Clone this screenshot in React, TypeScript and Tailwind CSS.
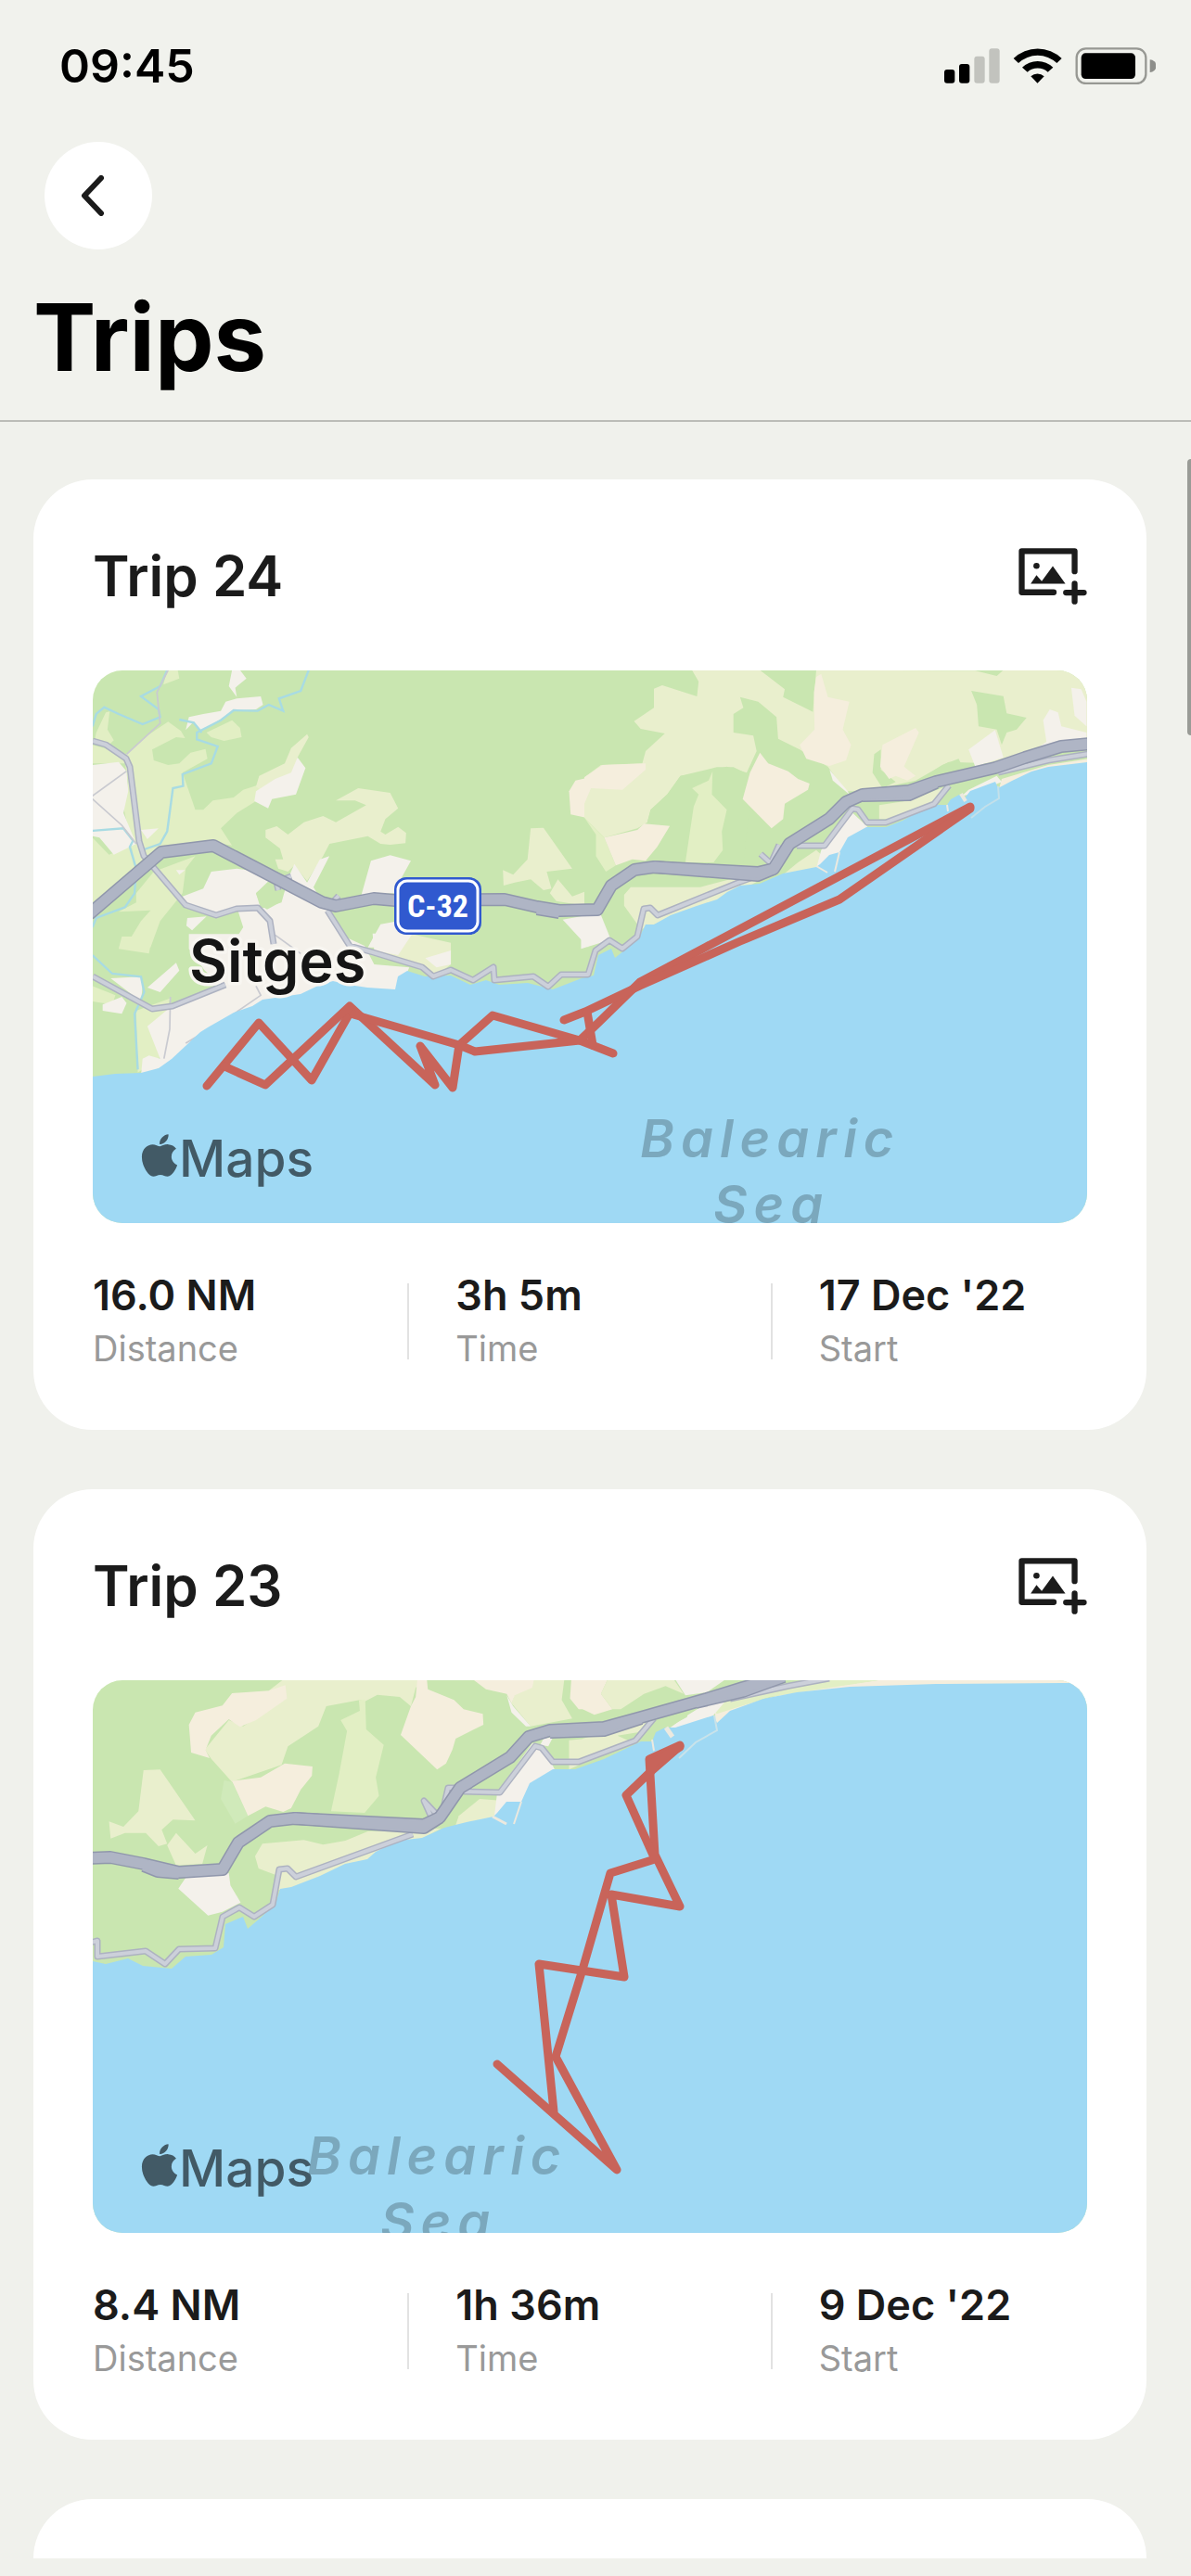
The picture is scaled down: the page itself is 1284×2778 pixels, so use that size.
import type { ReactNode } from "react";
import { FaApple } from "react-icons/fa";

const C = {
  land: "#c9e6b0",
  field: "#e9efcd",
  meadow: "#e2efc4",
  sand: "#f5eedd",
  town: "#f4f1eb",
  sea: "#9fd9f4",
  stream: "#a8dbe3",
  thin: "#c9cad0",
};

type Trip = {
  name: string;
  distance: string;
  time: string;
  start: string;
  map: ReactNode;
};

function Shapes({ fill, list }: { fill: string; list: string[] }) {
  return (
    <g fill={fill}>
      {list.map((points) => (
        <polygon key={points} points={points} />
      ))}
    </g>
  );
}

function Roads({ list, outline, fill, width }: { list: string[]; outline: string; fill: string; width: number }) {
  return (
    <g fill="none" strokeLinejoin="round">
      {list.map((points) => (
        <polyline key={"o" + points} points={points} stroke={outline} strokeWidth={width} />
      ))}
      {list.map((points) => (
        <polyline key={"f" + points} points={points} stroke={fill} strokeWidth={width - 3} />
      ))}
    </g>
  );
}

function MinorRoads({ list }: { list: string[] }) {
  return <Roads list={list} outline="#adb2c1" fill="#ccd0da" width={7} />;
}

function Motorway({ list }: { list: string[] }) {
  return <Roads list={list} outline="#9097ac" fill="#afb5c5" width={14} />;
}

function Track({ list }: { list: string[] }) {
  return (
    <g fill="none" stroke="#c8645a" strokeWidth={9} strokeLinejoin="round" strokeLinecap="round">
      {list.map((points) => (
        <polyline key={points} points={points} />
      ))}
    </g>
  );
}

function SeaLabel({ x, y }: { x: number; y: number }) {
  return (
    <g className="fill-[#7ba8bd] text-[56px] font-semibold italic tracking-[7px]">
      <text x={x} y={y}>
        Balearic
      </text>
      <text x={x + 79} y={y + 71}>
        Sea
      </text>
    </g>
  );
}

function MapFrame({ label, children }: { label: string; children: ReactNode }) {
  return (
    <svg viewBox="0 0 1072 596" role="img" aria-label={label} className="mt-[62px] block w-full rounded-[32px]">
      <rect width="1072" height="596" fill={C.land} />
      {children}
      <FaApple x={46} y={497} size={52} color="#425a66" />
      <text x={93} y={546} className="fill-[#425a66] text-[55px] font-medium">
        Maps
      </text>
    </svg>
  );
}

function SitgesMap() {
  return (
    <MapFrame label="Map of Trip 24">
      {/* Garraf hills, west */}
      <g transform="translate(-10 -13) scale(.3444 .3333)">
        <Shapes
          fill={C.meadow}
          list={[
            "250,85 262,38 295,38 300,65",
            "35,265 40,240 70,175 82,172 75,230 95,265 80,280",
            "135,310 200,250 265,205 305,235 318,258 290,255 215,295 220,330 265,345 300,340 335,305 382,293 388,325 310,370 350,490 375,490 405,460 470,450 500,425 545,410 550,380 560,430 535,465 480,500 430,550 465,605 400,595 245,610 160,700 150,600 125,480 140,400 130,340 28,340 28,280 100,300",
            "385,240 465,200 490,225 495,255 440,267 400,255",
            "28,580 80,635 150,605 160,700 28,810",
            "165,760 220,690 350,640 320,680 310,760 240,850 210,935 130,935 180,850 210,815 110,820 165,790",
          ]}
        />
        <Shapes
          fill={C.field}
          list={[
            "540,415 550,380 630,340 650,290 700,245 705,255 670,320 660,370 560,430",
            "790,460 860,420 960,435 985,485 945,520 930,560 945,570 985,545 1010,565 1008,598 960,603 930,600 890,575 770,600 750,640 700,720 660,670 640,690 610,680 600,650 625,650 615,615 570,580 570,555 605,543 640,570 690,530 750,510 790,530 885,475 850,460",
            "1400,550 1440,548 1530,680 1450,690 1465,745 1440,750 1400,715 1350,725 1315,735 1313,685 1345,700 1390,650",
            "1485,715 1530,770 1568,755 1568,800 1480,785 1460,760",
          ]}
        />
        <Shapes
          fill={C.town}
          list={[
            "28,345 110,335 135,365 140,430 125,500 165,600 95,635 50,580 28,575",
            "465,38 490,38 510,65 475,95 480,125 455,90",
            "330,190 375,180 430,170 445,140 480,130 555,123 562,150 540,165 470,170 370,235 345,205 320,232",
            "540,430 600,390 650,370 670,320 695,355 665,440 590,455 578,485 535,462",
            "310,770 375,745 400,690 480,680 550,690 580,720 540,760 555,810 620,790 640,715 660,665 700,725 740,650 770,640 720,740 790,860 830,935 460,935 500,870 480,805 415,825 320,795",
            "900,655 960,637 1025,655 985,730 975,760 870,765",
            "325,840 385,835 340,880 322,865",
            "890,935 930,860 985,850 1040,890 1000,935",
            "180,555 235,550 200,585",
            "1500,845 1580,830 1580,935",
            "290,685 318,685 300,700",
          ]}
        />
        <Shapes fill={C.land} list={["540,760 580,725 630,750 615,790 575,812 555,800", "790,830 900,800 930,850 890,935 840,920"]} />
        <Shapes fill={C.sand} list={["1520,430 1540,395 1572,388 1572,515 1525,505"]} />
        <g fill="none" stroke={C.stream} strokeWidth="7">
          <polyline points="28,220 40,180 65,158 110,180 185,213 240,190 235,165 180,123 240,90 262,38" />
          <polyline points="705,38 680,105 612,130 625,170 580,150 545,170 470,168 430,200 355,240 355,262 420,285 400,340 310,375 312,413 280,420 262,560 240,600 190,618" />
          <polyline points="28,558 125,550 155,590 145,610 165,680 160,760 130,805 40,840 28,870" />
          <polyline points="300,198 345,208 370,240" />
        </g>
        <g fill="none" stroke={C.thin} strokeWidth="5">
          <polyline points="265,38 230,110 240,210 135,310" />
          <polyline points="28,445 135,365" />
          <polyline points="28,455 120,540 165,600" />
        </g>
      </g>
      {/* hills above Castelldefels, east */}
      <g transform="translate(530 -13) scale(.3571 .3333)">
        <Shapes
          fill={C.field}
          list={[
            "325,38 345,75 340,123 235,87 210,98 210,160 150,203 170,228 243,243 185,300 175,340 50,345 0,385 0,515 60,580 160,550 190,530 200,490 250,440 290,380 380,365 430,350 490,370 520,300 510,250 450,240 450,180 480,160 470,125 525,140 580,190 585,260 650,295 735,350 790,430 850,430 1000,395 1100,335 1230,340 1520,270 1520,38 1265,38 1245,57 1180,40 700,38 690,173 600,125 605,100 530,38",
            "120,765 140,740 240,740 350,740 440,715 500,712 540,712 430,775 200,865 165,880 160,860 120,800",
            "645,660 700,620 720,640 700,680 600,700",
            "890,475 980,460 1090,415 1060,460 960,520 890,520",
          ]}
        />
        <Shapes
          fill={C.land}
          list={[
            "1168,105 1265,122 1275,178 1335,192 1305,230 1275,240 1260,280 1245,230 1190,220 1185,150",
            "875,310 895,295 895,360 940,400 900,420 870,370",
            "1000,400 1080,345 1130,325 1150,370",
            "290,380 400,352 450,352 495,375 500,470 480,660 250,660 170,655 220,610 258,542 190,530 200,490 250,440",
          ]}
        />
        <Shapes
          fill={C.meadow}
          list={["387,365 385,440 430,490 415,560 418,620 390,660 305,660 330,480 345,440 325,420 375,395", "0,515 35,570 35,640 65,690 95,670 60,580"]}
        />
        <Shapes
          fill={C.sand}
          list={[
            "700,60 715,50 735,125 800,140 780,230 805,280 790,330 740,348 670,325 650,280 695,230 693,110",
            "900,280 1000,225 1010,240 965,350 1000,380 975,395 940,380 920,390 893,350",
            "0,385 55,345 185,340 185,360 115,425 20,420 0,470",
            "530,305 555,340 615,365 645,390 680,405 675,425 605,470 600,520 565,550 478,455 500,370",
            "60,580 160,555 180,535 258,542 220,610 185,655 145,650 95,670",
            "1250,430 1260,390 1400,345 1520,325 1520,345 1400,360",
          ]}
        />
        <Shapes
          fill={C.town}
          list={[
            "810,500 855,545 795,600 770,640 700,680 715,620",
            "1160,295 1240,232 1265,320 1180,350",
            "1340,310 1395,270 1385,200 1405,165 1430,175 1440,220 1516,240 1516,265 1400,290",
            "1470,95 1500,100 1516,140 1516,220 1480,185",
            "-10,835 50,830 80,910 -10,940",
            "740,360 795,430 800,440 750,395",
            "1140,445 1160,425 1245,380 1260,400 1165,440",
          ]}
        />
      </g>
      {/* Sitges and its beaches */}
      <g transform="translate(-10 287) scale(.3444 .3333)">
        <Shapes fill={C.meadow} list={["110,40 120,0 215,0 205,55", "28,160 100,190 90,220 28,210", "165,240 270,200 240,390 170,440"]} />
        <Shapes
          fill={C.field}
          list={["900,60 1020,-10 1150,20 1150,90 1100,130 1060,100"]}
        />
        <Shapes
          fill={C.town}
          list={[
            "330,-8 800,-8 880,30 910,90 1020,100 985,180 740,200 530,260 320,390 180,450 185,395 205,385 240,395 200,290 270,230 440,165 380,110 330,40",
            "60,220 120,195 135,215 120,250 60,240",
            "85,135 180,130 185,160 180,210",
            "200,165 290,85 300,110 240,180",
            "905,-10 1030,-10 985,60 910,45",
            "1070,70 1150,45 1150,90 1105,100",
          ]}
        />
        <polyline points="28,60 90,120 180,130 190,180 160,250 170,430" fill="none" stroke={C.stream} strokeWidth="7" />
        <g fill="none" stroke={C.thin} strokeWidth="5">
          <polyline points="272,195 270,300 252,395" />
          <polyline points="320,345 450,265 555,190 540,160" />
          <polyline points="600,-5 680,55" />
        </g>
      </g>
      <polygon
        fill={C.sea}
        points="0,438 24,435 52,434 71,429 85,419 100,405 116,390 124,385 152,369 172,362 183,355 224,349 245,339 259,335 276,339 296,342 326,344 329,330 339,324 358,330 386,329 407,339 424,334 438,339 469,337 496,344 527,332 540,329 545,307 559,300 563,310 588,290 596,274 605,274 623,264 651,254 673,247 684,239 698,232 719,230 744,219 780,212 784,209 794,199 805,196 814,180 834,169 855,169 873,162 887,154 905,145 921,145 925,139 934,134 939,139 946,130 973,120 976,127 991,119 1012,109 1030,104 1072,99 1072,596 0,596"
      />
      <g fill="none" stroke="#ece9df" strokeWidth="2">
        <polyline points="780,211 792,218" />
        <polyline points="805,196 800,217" />
        <polyline points="936,133 941,141" strokeWidth="4" />
        <polyline points="921,145 922,152" />
        <polyline points="976,125 977,138 962,147 947,159" stroke="#c3e0ea" />
      </g>
      <MinorRoads
        list={[
          "0,76 14,80 36,95 40,104 50,184 55,200 100,253 133,264 155,257 178,256 191,270 195,295",
          "0,330 64,365 86,362 143,339",
          "253,259 277,297 302,304 355,320 367,330 386,323 410,334 432,320 433,334 475,330 491,341 505,328 534,328 542,302 557,291 571,300 587,287 594,257 601,256 609,264 698,228 709,224",
          "759,189 789,189 819,149 825,150 835,164 855,164 907,144 923,124",
          "976,110 1030,97 1074,90",
          "720,198 731,208 740,188",
          "200,237 198,228 214,222",
          "253,256 265,243",
        ]}
      />
      <Motorway
        list={[
          "605,212 717,221 734,214",
          "830,135 880,134 909,121",
          "479,257 503,261",
          "-4,263 74,196 130,189 247,250 262,254 303,246 326,248 444,247 479,255 503,259 544,258 559,232 584,215 605,212 717,218 734,214 751,187 794,160 812,142 830,134 880,130 909,120 973,105 1005,94 1044,82 1076,79",
        ]}
      />
      <rect x="325" y="223" width="94" height="62" rx="13" fill="#3059cf" />
      <rect x="329" y="227" width="86" height="54" rx="10" fill="none" stroke="#fff" strokeWidth="3" />
      <text
        x="372"
        y="266"
        textAnchor="middle"
        className="fill-white font-['Liberation_Sans_Narrow','Roboto_Condensed',Roboto,sans-serif] text-[34px] font-bold"
      >
        C-32
      </text>
      <text
        x="104"
        y="336"
        className="fill-[#151515] stroke-[#f8f6f1] text-[63px] font-semibold"
        strokeWidth="7"
        strokeLinejoin="round"
        paintOrder="stroke"
      >
        Sitges
      </text>
      <SeaLabel x={590} y={525} />
      <Track
        list={[
          "123,448 179,380 236,442 279,366",
          "142,427 186,447 277,362 369,447 353,405 388,450 395,404 431,372 525,399 561,413",
          "281,371 395,404 412,411 525,399 545,380 590,336 946,147",
          "508,377 531,368 590,340 698,292 805,247 946,149",
          "533,368 539,404",
        ]}
      />
    </MapFrame>
  );
}

function CoastMap() {
  return (
    <MapFrame label="Map of Trip 23">
      {/* hills, west */}
      <g transform="translate(-10 -12) scale(.3444 .3333)">
        <Shapes
          fill={C.field}
          list={[
            "625,34 580,70 635,95 500,185 455,165 380,260 400,290 465,365 620,310 640,250 735,185 760,120 865,100 880,105 920,83 990,90 1025,120 1040,60 1078,34",
            "188,327 240,325 350,490 280,487 245,520 262,565 235,573 195,530 130,530 85,548 80,493 125,510 172,460",
            "290,530 350,597 388,570 372,630 290,635 262,570",
            "537,605 560,565 690,553 750,568 820,555 890,525 1120,515 1060,548 900,612 640,712 605,715 600,665 548,645",
            "1165,505 1175,475 1240,420 1305,425 1310,480",
            "1340,110 1350,80 1410,34 1505,34 1497,100 1530,160 1400,185",
            "1520,230 1572,225 1572,300 1520,325",
          ]}
        />
        <Shapes fill={C.meadow} list={["862,100 865,135 805,165 825,200 800,340 775,460 880,465 925,410 915,350 940,245 885,195 882,100"]} />
        <Shapes fill="#d0eaba" list={["440,360 465,365 515,475 475,500 430,420"]} />
        <Shapes
          fill={C.sand}
          list={[
            "330,180 350,140 435,118 465,78 580,70 632,52 637,95 540,165 490,187 455,162 400,215 382,262 395,288 337,270",
            "1045,34 1075,34 1078,65 1160,100 1190,130 1250,145 1252,180 1165,225 1155,260 1135,305 1107,325 993,213 1025,120 1040,90",
            "465,362 555,350 630,305 717,315 715,345 680,390 650,450 625,462 570,445 515,475",
            "1220,34 1410,34 1405,60 1350,85 1340,110 1325,80 1260,65",
            "1527,34 1572,34 1572,130 1550,130 1523,95",
          ]}
        />
        <Shapes
          fill={C.town}
          list={[
            "297,710 320,675 455,660 460,700 492,755 435,785 390,797",
            "1405,240 1440,250 1475,325 1400,380 1370,440 1285,485 1295,400",
            "1440,225 1470,220 1455,250 1430,245",
            "1325,85 1345,120 1400,185 1385,185 1340,140",
          ]}
        />
      </g>
      {/* harbour and beach, east */}
      <g transform="translate(530 -12) scale(.3571 .3333)">
        <Shapes fill={C.sand} list={["-5,34 70,34 50,80 85,130 30,148 -5,130", "395,190 395,140 620,75 900,34 1520,34 1520,65 700,80"]} />
        <Shapes fill={C.field} list={["70,34 270,34 300,80 245,55 180,80 110,130 85,130 50,80", "-5,225 180,165 190,165 150,230 -5,290", "180,235 215,225 210,260"]} />
        <Shapes fill={C.meadow} list={["385,125 440,100 740,34 900,34 560,90 400,145"]} />
        <Shapes fill={C.town} list={["275,34 425,34 370,75 305,85", "245,200 310,150 370,110 430,98 385,155 275,195"]} />
        <Shapes fill={C.land} list={["100,215 160,205 250,150 315,130 310,155 215,210 205,235 140,235"]} />
      </g>
      <polygon
        fill={C.sea}
        points="0,303 14,306 38,300 54,308 85,311 100,298 128,296 141,288 143,263 162,255 167,268 181,256 197,241 202,225 214,223 245,211 272,198 296,193 305,185 329,173 355,170 379,159 403,153 432,147 436,143 446,131 462,131 471,111 496,96 520,96 551,85 591,66 603,66 607,56 617,51 628,51 669,38 673,46 687,33 723,20 759,13 816,7 909,4 1044,3 1072,3 1072,596 0,596"
      />
      <g fill="none" stroke="#ece9df" strokeWidth="2">
        <polyline points="431,147 446,155" strokeWidth="3" />
        <polyline points="462,131 454,155" />
        <polyline points="618,51 625,61" strokeWidth="5" />
        <polyline points="603,64 605,76" />
        <polyline points="670,38 673,54 650,67 632,84" stroke="#c9e3ea" />
      </g>
      <MinorRoads
        list={[
          "-3,283 5,281 5,298 57,292 78,306 93,290 132,289 140,255 158,245 174,255 194,242 201,204 210,203 219,212 345,166",
          "400,120 439,121 477,71 484,73 496,88 524,88 585,65 605,41",
          "687,20 751,6 794,-2",
          "372,146 357,130 366,150",
          "376,146 383,116 394,116",
        ]}
      />
      <Motorway
        list={[
          "217,149 357,159 374,148",
          "55,200 70,206 93,208",
          "493,56 551,54 591,41",
          "650,24 701,12 745,-4",
          "-4,192 19,191 55,198 93,207 140,204 157,175 191,152 217,149 357,156 374,148 396,116 450,83 470,61 493,54 551,51 591,40 662,20 701,8 744,-4",
        ]}
      />
      <SeaLabel x={231} y={533} />
      <Track
        list={[
          "633,70 600,85 606,188 633,244 559,231 573,320 481,306 497,465",
          "436,414 565,528 499,406 528,312 558,208 606,193 575,124 602,98 633,71",
          "633,72 602,90 602,98",
        ]}
      />
    </MapFrame>
  );
}

const trips: Trip[] = [
  { name: "Trip 24", distance: "16.0 NM", time: "3h 5m", start: "17 Dec '22", map: <SitgesMap /> },
  { name: "Trip 23", distance: "8.4 NM", time: "1h 36m", start: "9 Dec '22", map: <CoastMap /> },
];

function AddPhotoIcon() {
  return (
    <svg viewBox="0 0 222 184" className="h-[61px] w-[74px]" aria-hidden="true">
      <g fill="none" stroke="#1b1b1b" strokeWidth="19" strokeLinecap="round" strokeLinejoin="round">
        <path d="M182 76V10H10v134h104" />
        <path d="M182 116v58M154 145h58" />
      </g>
      <circle cx="58" cy="58" r="10" fill="#1b1b1b" />
      <path d="M39 116l19-28 17 20 36-49 41 57z" fill="#1b1b1b" />
    </svg>
  );
}

function StatusBar() {
  return (
    <div className="flex h-[142px] items-center justify-between pr-[38px] pl-16">
      <time className="text-[50px] leading-none font-semibold text-black">09:45</time>
      <svg viewBox="0 0 684 120" className="h-10 w-[228px]" aria-label="Signal, Wi-Fi and battery">
        <rect x="0" y="72" width="34" height="44" rx="9" />
        <rect x="48" y="54" width="34" height="62" rx="9" />
        <rect x="97" y="29" width="34" height="87" rx="9" fill="#c2c3be" />
        <rect x="145" y="4" width="34" height="112" rx="9" fill="#c2c3be" />
        <path d="M224 36a112 112 0 0 1 156 0l-16 15a90 90 0 0 0-124 0z" />
        <path d="M252 65a72 72 0 0 1 100 0l-17 15a50 50 0 0 0-66 0z" />
        <path d="M280 94a32 32 0 0 1 43 0l-21.500 22z" />
        <rect x="428" y="4" width="224" height="113" rx="30" fill="none" stroke="#979893" strokeWidth="7" />
        <rect x="443" y="19" width="175" height="83" rx="14" />
        <path d="M665 40a20 20 0 0 1 0 41z" fill="#8d8e8a" />
      </svg>
    </div>
  );
}

function Stat({ value, label }: { value: string; label: string }) {
  return (
    <div className="flex flex-1 flex-col-reverse">
      <dt className="mt-[10px] text-[38px] leading-[46px] text-[#999999]">{label}</dt>
      <dd className="text-[45px] leading-[48px] font-semibold whitespace-nowrap text-[#1b1b1b]">{value}</dd>
    </div>
  );
}

function Divider() {
  return <div className="mx-[50px] h-[82px] w-[2px] self-center bg-[#e2e2e2]" />;
}

function TripCard({ trip }: { trip: Trip }) {
  return (
    <article className="rounded-[64px] bg-white p-16 pb-[65px]">
      <header className="flex h-20 items-center justify-between">
        <h2 className="text-[60px] leading-none font-semibold text-[#1b1b1b]">{trip.name}</h2>
        <button type="button" aria-label={"Add photo to " + trip.name}>
          <AddPhotoIcon />
        </button>
      </header>
      {trip.map}
      <dl className="mt-[54px] flex">
        <Stat value={trip.distance} label="Distance" />
        <Divider />
        <Stat value={trip.time} label="Time" />
        <Divider />
        <Stat value={trip.start} label="Start" />
      </dl>
    </article>
  );
}

export default function App() {
  return (
    <div className="relative min-h-screen bg-[#f0f1ec] font-[Inter,sans-serif]">
      <header className="border-b-2 border-[#bbbcb7] bg-[#f1f2ed] pb-[30px]">
        <StatusBar />
        <button
          type="button"
          aria-label="Back"
          className="mt-[11px] ml-12 flex size-[116px] items-center justify-center rounded-full bg-white"
        >
          <svg viewBox="0 0 40 44" className="mr-3 h-[44px] w-10" fill="none" aria-hidden="true">
            <path d="M29 3 11 22l18 19" stroke="#1b1b1b" strokeWidth="6" strokeLinecap="round" strokeLinejoin="round" />
          </svg>
        </button>
        <h1 className="mt-[34px] px-9 text-[101px] leading-[120px] font-bold text-black">Trips</h1>
      </header>
      <main className="flex flex-col gap-16 pt-[62px] pr-12 pl-9">
        {trips.map((trip) => (
          <TripCard key={trip.name} trip={trip} />
        ))}
        <div className="h-16 rounded-t-[64px] bg-white" />
      </main>
      <div className="absolute top-[495px] right-0 h-[298px] w-1 rounded-l-full bg-[#999b96]" />
    </div>
  );
}
